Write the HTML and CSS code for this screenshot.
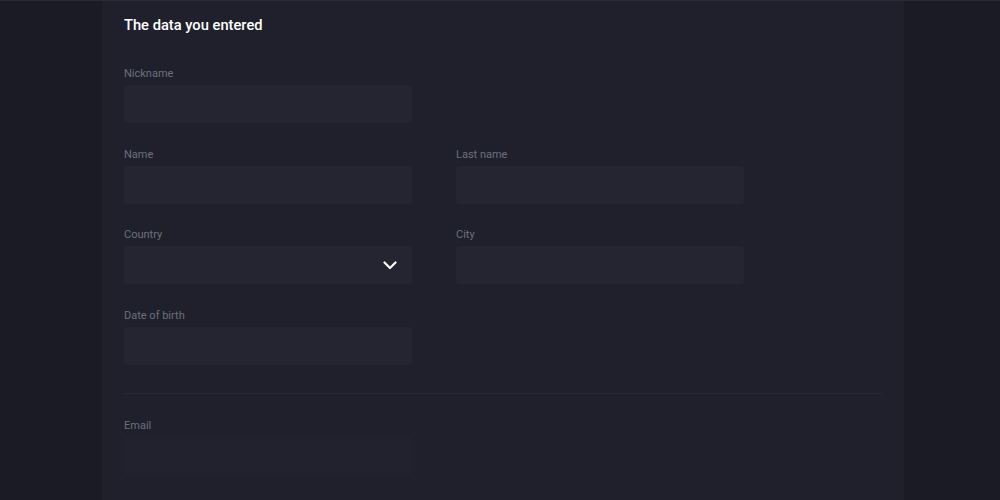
FILE: index.html
```html
<!DOCTYPE html>
<html lang="en">
<head>
<meta charset="utf-8">
<link rel="stylesheet" href="styles.css">
</head>
<body>
<div class="page">
  <section class="panel">
    <h2 class="title">The data you entered</h2>
    <div class="grid">
      <div class="field">
        <label class="label">Nickname</label>
        <div class="input"></div>
      </div>
      <div></div>
      <div class="field">
        <label class="label">Name</label>
        <div class="input"></div>
      </div>
      <div class="field">
        <label class="label">Last name</label>
        <div class="input"></div>
      </div>
      <div class="field">
        <label class="label">Country</label>
        <div class="input select">
          <svg class="chev" width="14" height="9" viewBox="0 0 14 9"><path d="M1.5 1.5 L7 7 L12.5 1.5" fill="none" stroke="#ffffff" stroke-width="2.2" stroke-linecap="round" stroke-linejoin="round"/></svg>
        </div>
      </div>
      <div class="field">
        <label class="label">City</label>
        <div class="input"></div>
      </div>
      <div class="field">
        <label class="label">Date of birth</label>
        <div class="input"></div>
      </div>
    </div>
    <hr class="divider">
    <div class="grid">
      <div class="field">
        <label class="label">Email</label>
        <div class="input muted"></div>
      </div>
    </div>
  </section>
</div>
</body>
</html>
```
FILE: styles.css
```css
html, body {
  margin: 0;
  padding: 0;
  height: 100%;
}
body {
  background: #1b1b25;
  font-family: Roboto, "Liberation Sans", Arial, sans-serif;
  overflow: hidden;
}
.page {
  border-top: 1px solid #282936;
  height: 100%;
  box-sizing: border-box;
  padding-left: 102px;
}
.panel {
  width: 802px;
  height: 100%;
  background: #1f202c;
  box-sizing: border-box;
  padding: 14px 22px 0 22px;
}
.title {
  margin: 0;
  font-size: 14.7px;
  font-weight: 500;
  line-height: 20px;
  color: #ffffff;
}
.grid {
  display: grid;
  grid-template-columns: 288px 288px;
  column-gap: 44px;
  row-gap: 22.67px;
}
.panel > .grid:first-of-type {
  margin-top: 30px;
}
.field {
  display: flex;
  flex-direction: column;
}
.label {
  font-size: 11px;
  line-height: 18px;
  height: 18px;
  color: #6e6f7d;
  margin-bottom: 2px;
}
.input {
  height: 38px;
  background: #242531;
  border-radius: 4px;
}
.select {
  display: flex;
  align-items: center;
  justify-content: flex-end;
  padding-right: 15px;
}
.chev {
  display: block;
}
.input.muted {
  background: #21222e;
}
.divider {
  border: 0;
  border-top: 1px solid #272835;
  margin: 28px 0 23px 0;
  width: 758px;
}
```
